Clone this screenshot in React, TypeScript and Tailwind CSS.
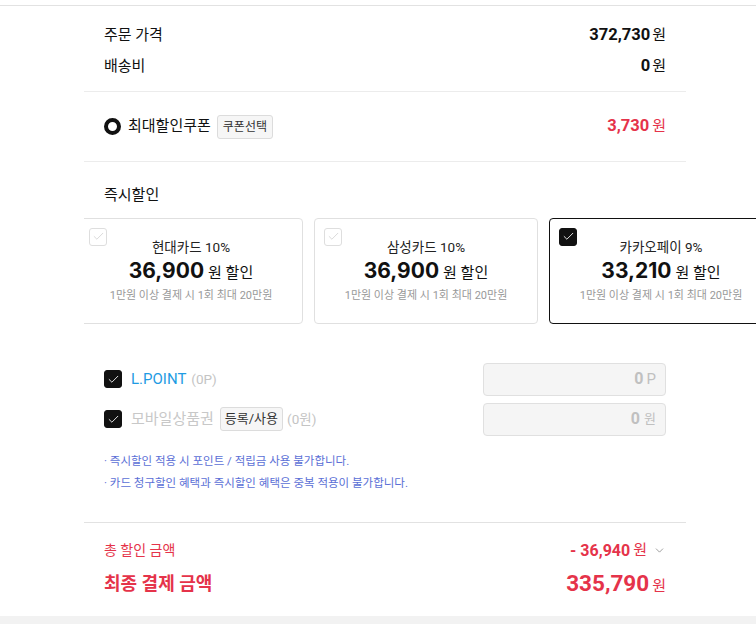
import { Check, ChevronDown } from 'lucide-react';

const cards = [
  { name: '현대카드 10%', amount: '36,900', active: false },
  { name: '삼성카드 10%', amount: '36,900', active: false },
  { name: '카카오페이 9%', amount: '33,210', active: true },
];

function Box({ on, dark }: { on?: boolean; dark?: boolean }) {
  return (
    <span
      className={`flex h-[18px] w-[18px] flex-shrink-0 items-center justify-center rounded-[3px] border ${
        dark ? 'border-[#111] bg-[#111]' : 'border-[#dedede] bg-white'
      }`}
    >
      <Check size={13} strokeWidth={1.6} className={on ? 'text-white' : 'text-[#d4d4d4]'} />
    </span>
  );
}

export default function App() {
  return (
    <div className="min-h-[624px] bg-white font-['Roboto','Noto_Sans_CJK_KR',sans-serif] text-[#111] overflow-hidden">
      <div className="h-[5px]" />
      <div className="border-t border-[#e2e2e2]">
        <div className="ml-[84px] w-[602px]">
          {/* 주문 가격 / 배송비 */}
          <div className="px-5 pt-[18px] pb-[13px] border-b border-[#ececec] space-y-[8px]">
            <div className="flex items-center justify-between h-[23px] text-[15px]">
              <span>주문 가격</span>
              <span>
                <b className="text-[16.5px] font-bold">372,730</b>
                <span className="ml-[2px]">원</span>
              </span>
            </div>
            <div className="flex items-center justify-between h-[23px] text-[15px]">
              <span>배송비</span>
              <span>
                <b className="text-[16.5px] font-bold">0</b>
                <span className="ml-[2px]">원</span>
              </span>
            </div>
          </div>

          {/* 쿠폰 */}
          <div className="px-5 h-[70px] border-b border-[#ececec] flex items-center justify-between">
            <div className="flex items-center">
              <span className="h-[17px] w-[17px] rounded-full border-[4px] border-[#111]" />
              <span className="ml-[7px] text-[15px]">최대할인쿠폰</span>
              <span className="ml-[6px] rounded-[3px] border border-[#dcdcdc] bg-[#f6f6f6] px-[5px] py-[2px] text-[12px] leading-[18px] text-[#333]">
                쿠폰선택
              </span>
            </div>
            <span className="text-[15px] text-[#e5334a]">
              <b className="text-[16.5px] font-bold">3,730</b>
              <span className="ml-[3px]">원</span>
            </span>
          </div>
        </div>

        {/* 즉시할인 */}
        <div className="ml-[84px] w-[602px] px-5 pt-[22px] text-[15px]">즉시할인</div>
        <div className="ml-[84px] mt-[11px] overflow-hidden">
          <div className="-ml-[5px] flex gap-[11px]">
            {cards.map((c) => (
              <div
                key={c.name}
                className={`relative h-[106px] w-[224px] flex-shrink-0 rounded-[4px] border ${
                  c.active ? 'border-[#111]' : 'border-[#e0e0e0]'
                } flex flex-col items-center pt-[18px]`}
              >
                <div className="absolute left-[9px] top-[9px]">
                  <Box on={c.active} dark={c.active} />
                </div>
                <div className="text-[13.5px] leading-[20px] text-[#222]">{c.name}</div>
                <div className="flex items-baseline leading-[28px]">
                  <span className="font-['Inter','Noto_Sans_CJK_KR',sans-serif] text-[21px] font-bold">{c.amount}</span>
                  <span className="ml-[4px] text-[15px]">원 할인</span>
                </div>
                <div className="mt-[1px] text-[11px] text-[#999]">1만원 이상 결제 시 1회 최대 20만원</div>
              </div>
            ))}
          </div>
        </div>

        <div className="ml-[84px] w-[602px]">
          {/* 포인트 */}
          <div className="px-5 pt-[39px]">
            <div className="flex items-center justify-between">
              <div className="flex items-center">
                <Box on dark />
                <span className="ml-[9px] text-[15px] text-[#1e9be3]">L.POINT</span>
                <span className="ml-[5px] text-[13.5px] text-[#c4c4c4]">(0P)</span>
              </div>
              <div className="flex h-[33px] w-[183px] items-center justify-end rounded-[4px] border border-[#e0e0e0] bg-[#f5f5f5] pr-[9px] text-[15px] text-[#c0c0c0]">
                <b className="text-[16px] font-bold">0</b>
                <span className="ml-[3px]">P</span>
              </div>
            </div>
            <div className="mt-[7px] flex items-center justify-between">
              <div className="flex items-center">
                <Box on dark />
                <span className="ml-[9px] text-[15px] text-[#c8c8c8]">모바일상품권</span>
                <span className="ml-[6px] rounded-[3px] border border-[#dcdcdc] bg-[#f6f6f6] px-[4px] py-[1px] text-[13px] leading-[20px] text-[#333]">
                  등록/사용
                </span>
                <span className="ml-[4px] text-[13.5px] text-[#c4c4c4]">(0원)</span>
              </div>
              <div className="flex h-[33px] w-[183px] items-center justify-end rounded-[4px] border border-[#e0e0e0] bg-[#f5f5f5] pr-[9px] text-[15px] text-[#c0c0c0]">
                <b className="text-[16px] font-bold">0</b>
                <span className="ml-[4px] text-[13px]">원</span>
              </div>
            </div>
            <div className="mt-[17px] space-y-[6px] text-[11.5px] leading-[16px] text-[#5b6fd6]">
              <div>· 즉시할인 적용 시 포인트 / 적립금 사용 불가합니다.</div>
              <div>· 카드 청구할인 혜택과 즉시할인 혜택은 중복 적용이 불가합니다.</div>
            </div>
          </div>

          {/* 합계 */}
          <div className="mt-[31px] border-t border-[#e2e2e2] px-5 pt-[17px] pb-[18px]">
            <div className="flex items-center justify-between h-[22px]">
              <span className="text-[14px] text-[#e5334a]">총 할인 금액</span>
              <span className="flex items-center text-[#e5334a]">
                <b className="text-[16px] font-bold">- 36,940</b>
                <span className="ml-[3px] text-[15px]">원</span>
                <ChevronDown size={13} strokeWidth={1.3} className="ml-[6px] text-[#777]" />
              </span>
            </div>
            <div className="mt-[8px] flex items-center justify-between h-[28px] text-[#e5334a]">
              <span className="text-[18px] font-bold">최종 결제 금액</span>
              <span className="flex items-baseline">
                <b className="text-[22.5px] font-bold">335,790</b>
                <span className="ml-[3px] text-[15px]">원</span>
              </span>
            </div>
          </div>
        </div>
        <div className="h-[8px] bg-[#f2f2f2]" />
      </div>
    </div>
  );
}
